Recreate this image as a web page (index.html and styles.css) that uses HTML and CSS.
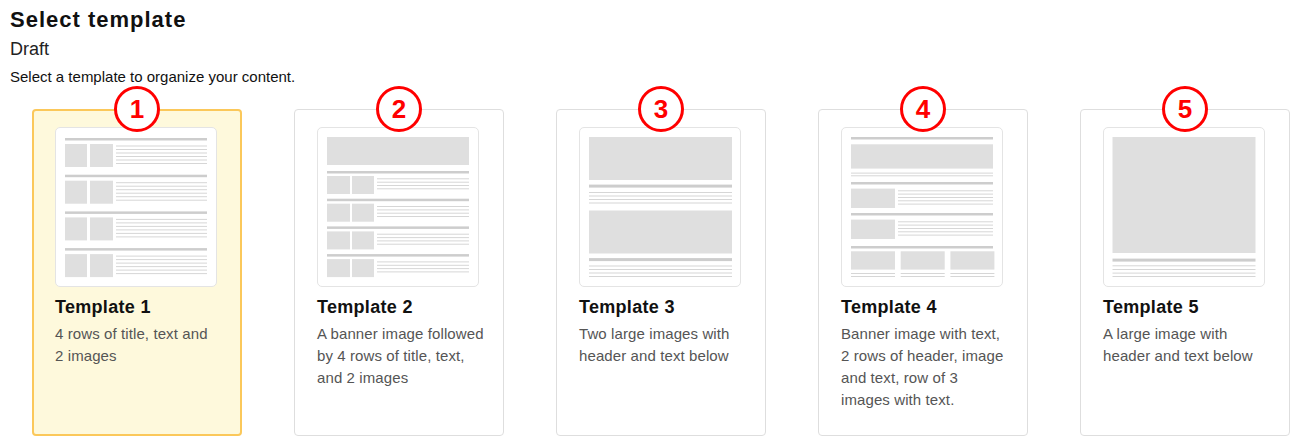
FILE: index.html
```html
<!DOCTYPE html>
<html lang="en">
<head>
<meta charset="utf-8">
<title>Select template</title>
<link rel="stylesheet" href="styles.css">
</head>
<body>
<div class="page">
  <h1 class="title">Select template</h1>
  <div class="status">Draft</div>
  <p class="hint">Select a template to organize your content.</p>

  <div class="cards">
    <div class="card selected">
      <span class="badge">1</span>
      <div class="thumb">
        <svg width="160" height="158" viewBox="0 0 160 158">
          <defs>
            <g id="t1row">
              <rect class="bar" x="9" y="10" width="142" height="2.5"/>
              <rect class="blk" x="9" y="16" width="22" height="23"/>
              <rect class="blk" x="34" y="16" width="23" height="23"/>
              <rect class="ln" x="60" y="17.5" width="91" height="1"/>
              <rect class="ln" x="60" y="21" width="91" height="1"/>
              <rect class="ln" x="60" y="24.5" width="91" height="1"/>
              <rect class="ln" x="60" y="28" width="91" height="1"/>
              <rect class="ln" x="60" y="31.5" width="91" height="1"/>
              <rect class="ln" x="60" y="35" width="91" height="1"/>
            </g>
          </defs>
          <use href="#t1row"/>
          <use href="#t1row" y="36.7"/>
          <use href="#t1row" y="73.4"/>
          <use href="#t1row" y="110.1"/>
        </svg>
      </div>
      <h2 class="name">Template 1</h2>
      <p class="desc">4 rows of title, text and<br>2 images</p>
    </div>

    <div class="card">
      <span class="badge">2</span>
      <div class="thumb">
        <svg width="160" height="158" viewBox="0 0 160 158">
          <defs>
            <g id="t2row">
              <rect class="bar" x="9" y="43" width="142" height="2.5"/>
              <rect class="blk" x="9" y="48" width="23" height="18"/>
              <rect class="blk" x="34" y="48" width="22" height="18"/>
              <rect class="ln" x="59" y="50.3" width="92" height="1"/>
              <rect class="ln" x="59" y="53.7" width="92" height="1"/>
              <rect class="ln" x="59" y="57" width="92" height="1"/>
              <rect class="ln" x="59" y="60.3" width="92" height="1"/>
            </g>
          </defs>
          <rect class="blk" x="9" y="9" width="142" height="28"/>
          <use href="#t2row"/>
          <use href="#t2row" y="27.7"/>
          <use href="#t2row" y="55.4"/>
          <use href="#t2row" y="83.1"/>
        </svg>
      </div>
      <h2 class="name">Template 2</h2>
      <p class="desc">A banner image followed<br>by 4 rows of title, text,<br>and 2 images</p>
    </div>

    <div class="card">
      <span class="badge">3</span>
      <div class="thumb">
        <svg width="160" height="158" viewBox="0 0 160 158">
          <defs>
            <g id="t3block">
              <rect class="blk" x="9" y="9" width="143" height="43"/>
              <rect class="bar" x="9" y="56.6" width="143" height="3"/>
              <rect class="ln" x="9" y="64" width="143" height="1"/>
              <rect class="ln" x="9" y="67.5" width="143" height="1"/>
              <rect class="ln" x="9" y="71" width="143" height="1"/>
              <rect class="ln" x="9" y="74.5" width="143" height="1"/>
            </g>
          </defs>
          <use href="#t3block"/>
          <use href="#t3block" y="73.5"/>
        </svg>
      </div>
      <h2 class="name">Template 3</h2>
      <p class="desc">Two large images with<br>header and text below</p>
    </div>

    <div class="card">
      <span class="badge">4</span>
      <div class="thumb">
        <svg width="160" height="158" viewBox="0 0 160 158">
          <defs>
            <g id="t4row">
              <rect class="bar" x="9" y="54" width="142" height="2.5"/>
              <rect class="blk" x="9" y="60.6" width="44" height="19.4"/>
              <rect class="ln" x="56" y="62.3" width="95" height="1"/>
              <rect class="ln" x="56" y="65.6" width="95" height="1"/>
              <rect class="ln" x="56" y="69" width="95" height="1"/>
              <rect class="ln" x="56" y="72.3" width="95" height="1"/>
              <rect class="ln" x="56" y="75.6" width="95" height="1"/>
            </g>
            <g id="t4col">
              <rect class="blk" x="9" y="123.3" width="44" height="18.3"/>
              <rect class="ln" x="9" y="145" width="44" height="1"/>
              <rect class="ln" x="9" y="148" width="44" height="1"/>
            </g>
          </defs>
          <rect class="bar" x="9" y="9" width="142" height="2.5"/>
          <rect class="blk" x="9" y="16.3" width="142" height="24.3"/>
          <rect class="ln" x="9" y="44.6" width="142" height="1"/>
          <rect class="ln" x="9" y="47.3" width="142" height="1"/>
          <use href="#t4row"/>
          <use href="#t4row" y="31"/>
          <rect class="bar" x="9" y="118" width="142" height="2.5"/>
          <use href="#t4col"/>
          <use href="#t4col" x="49.7"/>
          <use href="#t4col" x="99.4"/>
        </svg>
      </div>
      <h2 class="name">Template 4</h2>
      <p class="desc">Banner image with text,<br>2 rows of header, image<br>and text, row of 3<br>images with text.</p>
    </div>

    <div class="card">
      <span class="badge">5</span>
      <div class="thumb">
        <svg width="160" height="158" viewBox="0 0 160 158">
          <rect class="blk" x="8.5" y="9" width="143" height="116"/>
          <rect class="bar" x="8.5" y="130.6" width="143" height="3"/>
          <rect class="ln" x="8.5" y="137.3" width="143" height="1"/>
          <rect class="ln" x="8.5" y="141" width="143" height="1"/>
          <rect class="ln" x="8.5" y="144.6" width="143" height="1"/>
          <rect class="ln" x="8.5" y="148" width="143" height="1"/>
        </svg>
      </div>
      <h2 class="name">Template 5</h2>
      <p class="desc">A large image with<br>header and text below</p>
    </div>
  </div>
</div>
</body>
</html>
```

FILE: styles.css
```css
html, body {
  margin: 0;
  padding: 0;
  background: #ffffff;
}

body {
  font-family: "Liberation Sans", Arial, sans-serif;
  color: #111111;
}

.page {
  padding: 7px 0 0 10px;
}

.title {
  margin: 0;
  font-size: 22px;
  line-height: 26px;
  font-weight: bold;
  letter-spacing: 1px;
  color: #111111;
}

.status {
  margin-top: 5px;
  font-size: 18px;
  line-height: 22px;
  color: #222222;
}

.hint {
  margin: 8px 0 0 0;
  font-size: 15px;
  line-height: 18px;
  color: #111111;
}

.cards {
  display: flex;
  gap: 52px;
  margin: 23px 0 0 22px;
  align-items: stretch;
}

.card {
  position: relative;
  box-sizing: border-box;
  width: 210px;
  padding: 17px 14px 24px 22px;
  border: 1px solid #dedede;
  border-radius: 4px;
  background: #ffffff;
}

.card.selected {
  padding: 16px 13px 23px 21px;
  border: 2px solid #fbc85a;
  background: #fef9dc;
}

.badge {
  position: absolute;
  top: -24px;
  left: 50%;
  transform: translateX(-50%);
  box-sizing: border-box;
  width: 46px;
  height: 46px;
  border: 3px solid #ff0000;
  border-radius: 50%;
  background: #ffffff;
  color: #ff0000;
  font-size: 26px;
  font-weight: bold;
  line-height: 40px;
  text-align: center;
}

.card.selected .badge {
  top: -25px;
}

.thumb {
  box-sizing: border-box;
  width: 162px;
  height: 160px;
  border: 1px solid #e4e4e4;
  border-radius: 5px;
  background: #ffffff;
}

.thumb svg {
  display: block;
}

.blk { fill: #dfdfdf; }
.bar { fill: #cdcdcd; }
.ln { fill: #d6d6d6; }

.name {
  margin: 8.5px 0 0 0;
  font-size: 18px;
  line-height: 22px;
  font-weight: bold;
  letter-spacing: 0.3px;
  color: #111111;
}

.desc {
  margin: 5px 0 0 0;
  font-size: 15px;
  line-height: 22px;
  letter-spacing: 0.1px;
  white-space: nowrap;
  color: #555555;
}
```
